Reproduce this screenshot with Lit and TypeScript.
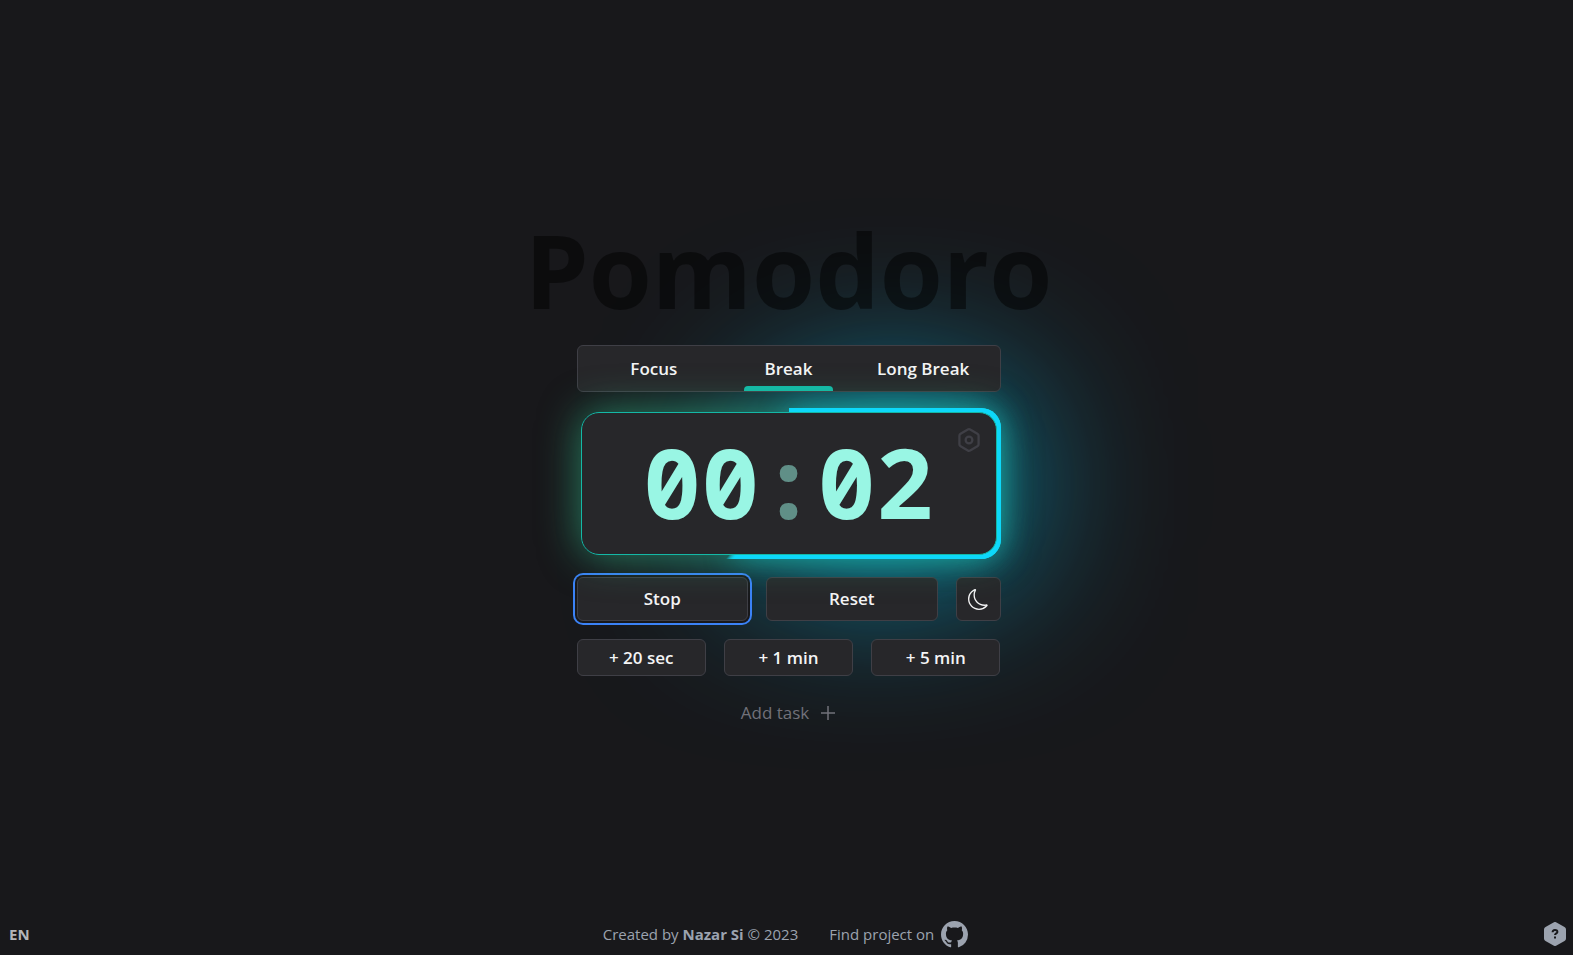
import { LitElement, html, css, svg } from "lit";
import { customElement, state } from "lit/decorators.js";
import { classMap } from "lit/directives/class-map.js";
import { styleMap } from "lit/directives/style-map.js";

const MODES = ["Focus", "Break", "Long Break"];
const EXTRA = ["+ 20 sec", "+ 1 min", "+ 5 min"];

const moonIcon = svg`<path d="M6 .278a.77.77 0 0 1 .08.858 7.2 7.2 0 0 0-.878 3.46c0 4.021 3.278 7.277 7.318 7.277q.792-.001 1.533-.16a.79.79 0 0 1 .81.316.73.73 0 0 1-.031.893A8.35 8.35 0 0 1 8.344 16C3.734 16 0 12.286 0 7.71 0 4.266 2.114 1.312 5.124.06A.75.75 0 0 1 6 .278M4.858 1.311A7.27 7.27 0 0 0 1.025 7.71c0 4.02 3.279 7.276 7.319 7.276a7.32 7.32 0 0 0 5.205-2.162q-.506.063-1.029.063c-4.61 0-8.343-3.714-8.343-8.29 0-1.167.242-2.278.681-3.286"/>`;

@customElement("app-root")
export class AppRoot extends LitElement {
  @state() private mode = 1;
  @state() private elapsed = 0.6;

  static styles = css`
    :host {
      display: flex;
      flex-direction: column;
      min-height: 100vh;
      isolation: isolate;
      overflow: hidden;
      background: #18181b;
      color: #f4f4f5;
      font-family: "Open Sans", "Noto Sans", sans-serif;
    }
    * { box-sizing: border-box; }
    button {
      margin: 0;
      padding: 0;
      border: 0;
      background: none;
      color: inherit;
      font: inherit;
      cursor: pointer;
    }
    button:focus { outline: none; }
    svg { display: block; }

    main {
      flex: 1;
      display: flex;
      flex-direction: column;
      align-items: center;
      justify-content: center;
      padding: 37px 0 0 4px;
    }
    h1 {
      position: relative;
      z-index: 1;
      margin: 0 0 24px;
      font-size: 102px;
      line-height: 102px;
      font-weight: 700;
      color: rgb(0 0 0 / 0.5);
    }
    .panel {
      display: flex;
      flex-direction: column;
      gap: 18px;
      width: 424px;
      max-width: 100%;
      font-size: 17px;
      line-height: 24px;
      font-weight: 600;
    }
    .surface {
      position: relative;
      z-index: 1;
      background: #27272a;
      border: 1px solid #3f3f46;
      border-radius: 6px;
    }
    .tabs {
      display: grid;
      grid-template-columns: repeat(3, 1fr);
      height: 47px;
      padding: 0 9px;
      margin-bottom: -2px;
    }
    .tab {
      display: grid;
      grid-template-rows: 1fr 5px;
      align-items: center;
      justify-items: center;
      padding-top: 5px;
    }
    .tab.active::after {
      content: "";
      width: 66%;
      height: 5px;
      border-radius: 4px 4px 0 0;
      background: #14b8a6;
    }

    .timer {
      position: relative;
      padding: 4px;
    }
    .glow, .ring, .halo {
      position: absolute;
      inset: 0;
      pointer-events: none;
    }
    .glow {
      filter: drop-shadow(0 0 14px rgb(6 182 212 / 0.5)) drop-shadow(0 0 88px rgb(6 182 226));
    }
    .ring { z-index: 2; }
    .halo {
      z-index: 2;
      inset: 4px;
      border-radius: 18px;
      box-shadow: 0 0 40px rgb(52 211 153 / 0.55);
    }
    .progress {
      height: 100%;
      border-radius: 20px;
    }
    .face {
      position: relative;
      z-index: 2;
      display: flex;
      align-items: center;
      justify-content: center;
      height: 143px;
      padding-bottom: 5px;
      border: 1px solid #14b8a6;
      border-radius: 18px;
      background: #27272a;
      color: #99f6e4;
      font-family: "Noto Sans Mono", "DejaVu Sans Mono", monospace;
      font-size: 97px;
      line-height: 100px;
      font-weight: 700;
    }
    .colon { opacity: 0.5; }
    .settings {
      position: absolute;
      top: 12px;
      right: 12px;
      color: #3f3f46;
    }

    .actions {
      display: grid;
      grid-template-columns: 1fr 1fr 45px;
      gap: 18px;
    }
    .actions .surface { height: 44px; }
    .surface.focused {
      box-shadow: 0 0 0 2px #18181b, 0 0 0 4px #3b82f6;
    }
    .theme {
      display: grid;
      place-items: center;
    }
    .extra {
      display: grid;
      grid-template-columns: repeat(3, 1fr);
      gap: 18px;
    }
    .extra .surface { height: 37px; }
    .add {
      position: relative;
      z-index: 1;
      align-self: center;
      display: flex;
      align-items: center;
      gap: 11px;
      height: 37px;
      color: #71717a;
      font-weight: 400;
    }

    footer {
      display: grid;
      grid-template-columns: 1fr auto 1fr;
      align-items: center;
      height: 42px;
      padding: 0 7px 0 9px;
      color: #9ca3af;
      font-size: 15px;
      line-height: 20px;
    }
    .lang {
      justify-self: start;
      font-weight: 700;
      color: #b4b4b8;
    }
    .credits {
      display: flex;
      align-items: center;
      gap: 31px;
      padding-right: 4px;
    }
    .project {
      display: flex;
      align-items: center;
      gap: 7px;
      color: inherit;
      text-decoration: none;
    }
    .help { justify-self: end; }
  `;

  render() {
    const end = this.elapsed * 360;
    const sweep = { background: `conic-gradient(#0dd8fa ${end}deg, transparent ${end + 4}deg)` };
    return html`
      <main>
        <h1>Pomodoro</h1>
        <div class="panel">
          <div class="surface tabs">
            ${MODES.map(
              (name, i) => html`<button
                class=${classMap({ tab: true, active: i === this.mode })}
                @click=${() => (this.mode = i)}
              >${name}</button>`
            )}
          </div>

          <div class="timer">
            <div class="glow"><div class="progress" style=${styleMap(sweep)}></div></div>
            <div class="halo"></div>
            <div class="ring"><div class="progress" style=${styleMap(sweep)}></div></div>
            <div class="face">
              <span>00</span><span class="colon">:</span><span>02</span>
              <button class="settings" aria-label="Settings">
                <svg width="30" height="30" viewBox="0 0 26 26" fill="none" stroke="currentColor" stroke-width="2" stroke-linejoin="round">
                  <path d="M12 3.900a2 2 0 0 1 2 0l6.300 3.600a2 2 0 0 1 1 1.800v7.400a2 2 0 0 1-1 1.800L14 22.100a2 2 0 0 1-2 0l-6.300-3.600a2 2 0 0 1-1-1.800V9.300a2 2 0 0 1 1-1.800z" />
                  <circle cx="13" cy="13" r="2.900" />
                </svg>
              </button>
            </div>
          </div>

          <div class="actions">
            <button class="surface focused">Stop</button>
            <button class="surface">Reset</button>
            <button class="surface theme" aria-label="Dark theme">
              <svg width="21" height="21" viewBox="0 0 16 16" fill="currentColor">${moonIcon}</svg>
            </button>
          </div>

          <div class="extra">
            ${EXTRA.map((label) => html`<button class="surface">${label}</button>`)}
          </div>

          <button class="add">
            Add task
            <svg width="16" height="16" viewBox="0 0 16 16" stroke="currentColor" stroke-width="1.5" fill="none">
              <path d="M8 1v14M1 8h14" />
            </svg>
          </button>
        </div>
      </main>

      <footer>
        <button class="lang">EN</button>
        <div class="credits">
          <span>Created by <b>Nazar Si</b> © 2023</span>
          <a class="project" href="#">
            Find project on
            <svg width="27" height="27" viewBox="0 0 16 16" fill="currentColor">
              <path d="M8 0C3.58 0 0 3.58 0 8c0 3.54 2.29 6.53 5.47 7.59.4.07.55-.17.55-.38 0-.19-.01-.82-.01-1.49-2.01.37-2.53-.49-2.69-.94-.09-.23-.48-.94-.82-1.13-.28-.15-.68-.52-.01-.53.63-.01 1.08.58 1.23.82.72 1.21 1.87.87 2.33.66.07-.52.28-.87.51-1.07-1.78-.2-3.64-.89-3.64-3.95 0-.87.31-1.59.82-2.15-.08-.2-.36-1.02.08-2.12 0 0 .67-.21 2.2.82.64-.18 1.32-.27 2-.27s1.36.09 2 .27c1.53-1.04 2.2-.82 2.2-.82.44 1.1.16 1.92.08 2.12.51.56.82 1.27.82 2.15 0 3.07-1.87 3.75-3.65 3.95.29.25.54.73.54 1.48 0 1.07-.01 1.93-.01 2.2 0 .21.15.46.55.38A8.01 8.01 0 0 0 16 8c0-4.42-3.58-8-8-8" />
            </svg>
          </a>
        </div>
        <button class="help" aria-label="Help">
          <svg width="22" height="24" viewBox="0 0 22 24">
            <path fill="#9ca3af" d="M9.5.4a3 3 0 0 1 3 0l8 4.6a3 3 0 0 1 1.5 2.6v8.8a3 3 0 0 1-1.5 2.6l-8 4.600a3 3 0 0 1-3 0l-8-4.600A3 3 0 0 1 0 16.400V7.600A3 3 0 0 1 1.500 5z" />
            <path fill="none" stroke="#18181b" stroke-width="2" d="M8.6 10.2c0-3 4.800-3 4.800-.3 0 1.500-2.400 1.500-2.400 3.100" />
            <path fill="#18181b" d="M10 14.500h2v2h-2z" />
          </svg>
        </button>
      </footer>
    `;
  }
}
